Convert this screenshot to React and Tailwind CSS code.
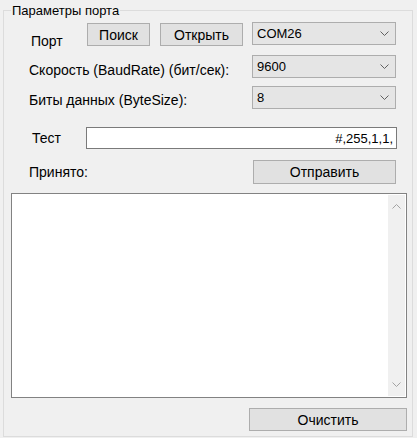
function Chevron({ up = false, className = "" }) {
  return (
    <svg width="9" height="5" viewBox="0 0 9 5" className={className}>
      <path
        d={up ? "M0.5 4.5L4.5 0.5L8.5 4.5" : "M0.5 0.5L4.5 4.5L8.5 0.5"}
        fill="none"
        stroke="currentColor"
        strokeWidth="1"
      />
    </svg>
  );
}

function Button({ children, className = "" }) {
  return (
    <button
      className={`flex items-center justify-center border border-[#adadad] bg-[#e1e1e1] text-[14px] leading-[16px] ${className}`}
    >
      {children}
    </button>
  );
}

function Combo({ value }) {
  return (
    <div className="flex h-[23px] w-[144px] items-center justify-between border border-[#adadad] bg-[#e5e5e5] pl-[4px] pr-[6px]">
      <span>{value}</span>
      <Chevron className="text-[#606060]" />
    </div>
  );
}

export default function App() {
  return (
    <div className="h-[438px] w-[417px] overflow-hidden bg-[#f0f0f0] pl-[3px] pt-[10px] font-['Liberation_Sans',Arial,sans-serif] text-[13px] leading-[15px] text-black">
      {/* Group box */}
      <div className="relative flex h-[427px] w-[410px] flex-col border border-[#dcdcdc]">
        <span className="absolute -top-[8px] left-[7px] bg-[#f0f0f0] px-[1px]">
          Параметры порта
        </span>

        {/* Port */}
        <div className="mt-[11px] flex h-[24px] text-[14px] leading-[16px]">
          <span className="ml-[27px] mt-[11px] w-[56px]">Порт</span>
          <Button className="mt-[1px] h-[23px] w-[63px]">Поиск</Button>
          <Button className="ml-[10px] mt-[1px] h-[23px] w-[83px]">Открыть</Button>
          <div className="ml-[9px] text-[13px] leading-[15px]">
            <Combo value="COM26" />
          </div>
        </div>

        {/* Baud rate */}
        <div className="mt-[9px] flex h-[23px]">
          <span className="ml-[25px] mt-[7px] w-[223px] text-[14px] leading-[16px]">
            Скорость (BaudRate) (бит/сек):
          </span>
          <Combo value="9600" />
        </div>

        {/* Byte size */}
        <div className="mt-[8px] flex h-[23px]">
          <span className="ml-[25px] mt-[6px] w-[223px] text-[14px] leading-[16px]">
            Биты данных (ByteSize):
          </span>
          <Combo value="8" />
        </div>

        {/* Test */}
        <div className="mt-[18px] flex h-[22px]">
          <span className="ml-[28px] mt-[3px] w-[54px] text-[14px] leading-[16px]">Тест</span>
          <div className="flex h-[22px] w-[311px] items-center justify-end border border-[#7a7a7a] bg-white pr-[3px]">
            #,255,1,1,
          </div>
        </div>

        {/* Received */}
        <div className="mt-[11px] flex h-[24px]">
          <span className="ml-[25px] mt-[4px] w-[224px] text-[14px] leading-[16px]">Принято:</span>
          <Button className="h-[24px] w-[143px]">Отправить</Button>
        </div>

        {/* Log */}
        <div className="ml-[7px] mt-[9px] flex h-[205px] w-[396px] border border-[#828282] bg-white">
          <div className="flex-1" />
          <div className="my-[1px] mr-[1px] flex w-[17px] flex-col items-center justify-between bg-[#f0f0f0] py-[9px]">
            <Chevron up className="text-[#a3a3a3]" />
            <Chevron className="text-[#a3a3a3]" />
          </div>
        </div>

        <div className="mt-[10px] flex">
          <Button className="ml-[245px] h-[23px] w-[158px]">Очистить</Button>
        </div>
      </div>
    </div>
  );
}
